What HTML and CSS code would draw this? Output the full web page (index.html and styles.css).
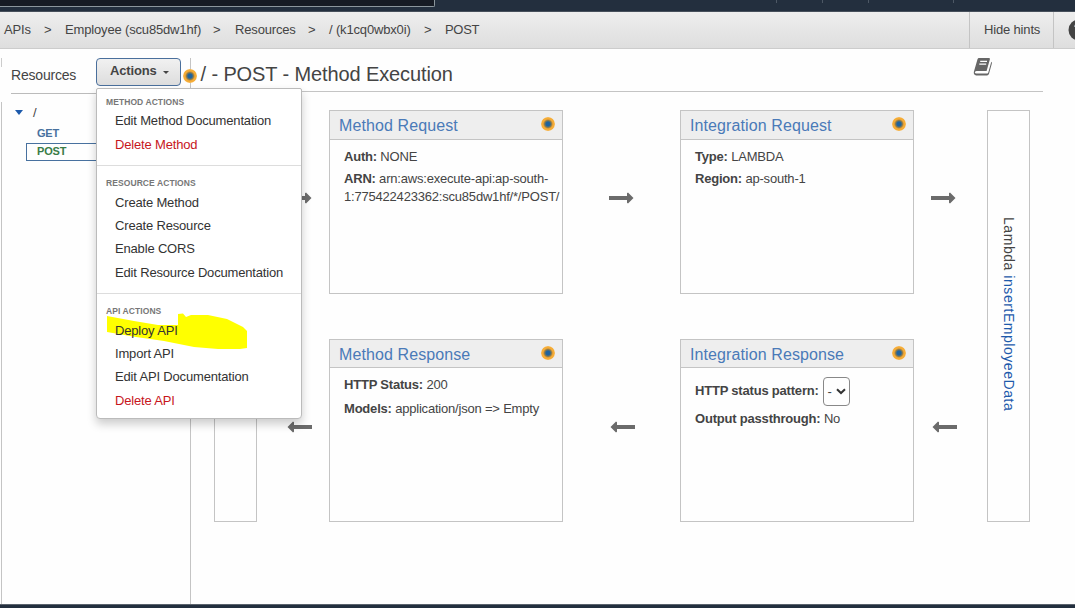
FILE: index.html
```html
<!DOCTYPE html>
<html lang="en">
<head>
<meta charset="utf-8">
<title>API Gateway - Method Execution</title>
<link rel="stylesheet" href="styles.css">
</head>
<body>
<svg class="defs" width="0" height="0" aria-hidden="true">
  <symbol id="arrow" viewBox="0 0 25 12"><path d="M0 4h18V1.200L19 0.600L24.500 6L19 11.400L18 10.800V8H0z" fill="#6b6b6b"/></symbol>
</svg>
<div class="page">
  <header class="topbar">
    <div class="search"></div>
    <div class="seps"><i></i><i></i><i></i><i></i></div>
  </header>
  <nav class="crumbs">
    <span class="c1">APIs</span><span class="gt g1">&gt;</span>
    <span class="c2">Employee (scu85dw1hf)</span><span class="gt g2">&gt;</span>
    <span class="c3">Resources</span><span class="gt g3">&gt;</span>
    <span class="c4">/ (k1cq0wbx0i)</span><span class="gt g4">&gt;</span>
    <span class="c5">POST</span>
    <div class="hints"><span>Hide hints</span></div>
    <svg class="help" width="22" height="22" viewBox="0 0 22 22"><circle cx="11" cy="11" r="10.500" fill="#444"/><path d="M7.500 8Q7.500 5 11 5T14.500 8Q14.500 10 11 12V14M11 16V18" fill="none" stroke="#dbe8f5" stroke-width="2.200"/></svg>
  </nav>
  <div class="body">
    <aside class="sidebar">
      <div class="side-head">
        <span class="side-title">Resources</span>
        <div class="actions">
          <button class="btn">Actions<span class="caret"></span></button>
          <div class="menu">
            <section>
              <h4>METHOD ACTIONS</h4>
              <a>Edit Method Documentation</a>
              <a class="danger">Delete Method</a>
            </section>
            <section>
              <h4>RESOURCE ACTIONS</h4>
              <a>Create Method</a>
              <a>Create Resource</a>
              <a>Enable CORS</a>
              <a>Edit Resource Documentation</a>
            </section>
            <section>
              <svg class="marker" width="142" height="36" viewBox="0 0 142 36"><path d="M1 3L28 8L52 12H72V1L77 0.500L80 4L85 2H102L121 6L137 14L141 18V35L134 36H112L88 34L58 28L30 24L1 19z" fill="#ff0"/></svg>
              <h4>API ACTIONS</h4>
              <a>Deploy API</a>
              <a>Import API</a>
              <a>Edit API Documentation</a>
              <a class="danger">Delete API</a>
            </section>
          </div>
        </div>
      </div>
      <div class="tree">
        <div class="root"><span class="tri"></span><span>/</span></div>
        <div class="get">GET</div>
        <div class="post">POST</div>
      </div>
    </aside>
    <main class="main">
      <div class="title-row">
        <i class="dot title-dot"></i>
        <h1>/ - POST - Method Execution</h1>
        <svg class="book" width="20" height="20" viewBox="0 0 20 20"><path d="M6 1H15.800Q17.300 1 16.900 2.300L13.600 14H3.500Q1.800 14 1.800 15.500Q2 16.500 3.500 16.500H14.200Q15 16.500 15.300 15.600L18.300 4.800Q19.300 5.300 18.800 6.800L16 16.800Q15.500 18.400 14 18.400H3.200Q0.400 18 0.800 15L4.500 2.300Q4.900 1 6 1z" fill="#666"/><path d="M7.200 4.400H14M6.300 7.200H13.200" stroke="#fff" stroke-width="1.300"/></svg>
      </div>
      <div class="flow">
        <div class="end client"></div>
        <div class="arr a1 r1"><svg><use href="#arrow"/></svg></div>
        <section class="card">
          <header><h2>Method Request</h2><i class="dot"></i></header>
          <p><b>Auth:</b> NONE</p>
          <p class="arn"><b>ARN:</b> arn:aws:execute-api:ap-south-<br>1:775422423362:scu85dw1hf/*/POST/</p>
        </section>
        <div class="arr a2 r1"><svg><use href="#arrow"/></svg></div>
        <section class="card int">
          <header><h2>Integration Request</h2><i class="dot"></i></header>
          <p><b>Type:</b> LAMBDA</p>
          <p><b>Region:</b> ap-south-1</p>
        </section>
        <div class="arr a3 r1"><svg><use href="#arrow"/></svg></div>
        <div class="end lambda"><span>Lambda <a>insertEmployeeData</a></span></div>
        <div class="arr a1 r2"><svg><use href="#arrow"/></svg></div>
        <section class="card low">
          <header><h2>Method Response</h2><i class="dot"></i></header>
          <p><b>HTTP Status:</b> 200</p>
          <p class="models"><b>Models:</b> application/json =&gt; Empty</p>
        </section>
        <div class="arr a2 r2"><svg><use href="#arrow"/></svg></div>
        <section class="card low int">
          <header><h2>Integration Response</h2><i class="dot"></i></header>
          <p class="pattern"><b>HTTP status pattern:</b><span class="select">-<svg width="10" height="7" viewBox="0 0 10 7"><path d="M1 1.200L5 5L9 1.200" fill="none" stroke="#333" stroke-width="2"/></svg></span></p>
          <p class="pass"><b>Output passthrough:</b> No</p>
        </section>
        <div class="arr a3 r2"><svg><use href="#arrow"/></svg></div>
      </div>
    </main>
  </div>
  <footer class="footer"></footer>
</div>
</body>
</html>
```
FILE: styles.css
```css
* { box-sizing: border-box; }
body { margin: 0; background: #fefefe; color: #444; font: 13px "Liberation Sans", Arial, sans-serif; }
h1, h2, h4, p { margin: 0; font-weight: normal; }
.defs { display: block; height: 0; }
.page { width: 1075px; height: 608px; display: flex; flex-direction: column; overflow: hidden; }

.topbar { height: 12px; flex: none; background: #232f3e; border-bottom: 1px solid #47505b; display: flex; justify-content: space-between; }
.search { width: 435px; height: 7px; background: #161b24; border: solid #8b969c; border-width: 0 1px 1px 0; border-radius: 0 0 2px 0; }
.seps { display: flex; margin-right: 121px; }
.seps i { width: 1px; height: 3px; background: #4d5865; margin-left: 45px; }
.seps i:first-child { margin-left: 0; }
.seps i:last-child { margin-left: 84px; }

.crumbs { height: 37px; flex: none; background: linear-gradient(#eee, #dedede); border-bottom: 1px solid #ccc; display: flex; align-items: center; padding-left: 4px; white-space: nowrap; letter-spacing: -.16px; }
.crumbs > span { position: static; padding-bottom: 1px; }
.c1 { width: 40px; } .c2 { width: 148px; } .c3 { width: 73px; } .c4 { width: 95px; }
.g1 { width: 21px; } .g2 { width: 22px; } .g3 { width: 21px; } .g4 { width: 21px; }
.hints { margin-left: auto; align-self: stretch; width: 85px; border: solid #c4c4c4; border-width: 0 1px; display: flex; align-items: center; padding: 0 0 1px 14px; }
.crumbs .c5 { width: 40px; letter-spacing: -.3px; }
.help { flex: none; margin: 0 -15px 0 14px; }

.body { flex: 1; display: flex; min-height: 0; }
.sidebar { width: 191px; flex: none; display: flex; flex-direction: column; border-right: 1px solid #c4c4c4; margin-top: 9px; }
.side-head { height: 36px; flex: none; margin-left: 1px; padding-left: 10px; display: flex; background: linear-gradient(#bbb, #bbb) 10px 35px / 180px 1px no-repeat, linear-gradient(#ccc, #ccc) 0 0 / 1px 9px no-repeat; }
.side-title { width: 85px; padding-top: 9px; font-size: 14px; line-height: 17px; letter-spacing: -.2px; }
.actions { position: relative; }
.btn { display: flex; align-items: center; width: 85px; height: 28px; padding: 0 0 3px 13px; border: 1px solid #4a6f9c; border-radius: 4px; background: linear-gradient(#f1f1f1, #ddd); font: bold 13px "Liberation Sans", Arial, sans-serif; letter-spacing: -.15px; color: #444; }
.caret { border: solid transparent; border-width: 3px 3px 0; border-top-color: #444; margin: 4px 0 0 6px; }
.menu { position: absolute; z-index: 2; left: 0; top: 30px; width: 206px; height: 331px; background: #fff; border: 1px solid #bbb; border-radius: 2px 2px 4px 4px; box-shadow: 0 5px 10px rgba(0,0,0,.2); padding-top: 6px; color: #333; }
.menu section { position: relative; padding: 0 0 9px 18px; }
.menu section + section { border-top: 1px solid #ddd; padding-top: 10px; }
.menu h4 { position: relative; margin: 0 0 .4px -9px; font-size: 8.500px; font-weight: bold; line-height: 14px; letter-spacing: .08px; color: #777; }
.menu a { position: relative; display: block; height: 23.400px; line-height: 23.400px; letter-spacing: -.17px; white-space: nowrap; }
.menu h4 + a { margin-top: .3px; }
.menu .danger { color: #c7161d; padding-top: .6px; }
.marker { position: absolute; left: 9px; top: 19px; }

.tree { flex: 1; margin-left: 1px; margin-top: 8px; border-left: 1px solid #c4c4c4; font-size: 11px; font-weight: bold; }
.root { display: flex; align-items: center; height: 21px; padding-left: 13px; font-size: 13px; font-weight: normal; }
.tri { border: solid transparent; border-width: 5px 4px 0; border-top-color: #1d5aab; margin-right: 10px; }
.get { height: 20px; line-height: 20px; padding-left: 35px; letter-spacing: -.2px; color: #48719f; }
.post { height: 18px; line-height: 15px; margin-left: 24px; padding-left: 10px; border: 1px solid #48719f; border-right: 0; letter-spacing: -.2px; color: #397c47; }

.main { flex: 1; min-width: 0; }
.title-row { position: relative; height: 43px; width: 852px; padding: 12px 0 0 9.500px; border-bottom: 1px solid #c4c4c4; display: flex; justify-content: space-between; }
h1 { font-size: 20px; line-height: 26px; letter-spacing: -.11px; }
.book { margin: -4px 50px 0 0; }
.dot { flex: none; width: 14px; height: 14px; border-radius: 50%; background: radial-gradient(circle, #1d63a0 0 2px, #8b7b4c 3.500px, #d99b3c 4.500px, #f5ac36 5px 6.300px, #f8c87b 7px); }
.title-dot { position: absolute; left: -8px; top: 20px; }

.flow { margin: 18px 0 0 23px; display: grid; grid-template-columns: 43px 72px 234px 117px 234px 73px 43px; grid-template-rows: 184px 45px 183px; }
.end { border: 1px solid #c4c4c4; grid-row: 1 / 4; }
.client { grid-column: 1; }
.lambda { grid-column: 7; writing-mode: vertical-rl; display: flex; align-items: center; padding-top: 106px; font-size: 14px; letter-spacing: .55px; white-space: nowrap; }
.lambda a { color: #1d5aab; }
.r1 { grid-row: 1; padding-top: 82px; }
.r2 { grid-row: 3; padding-top: 82px; }
.r2 svg { transform: scaleX(-1); }
.arr svg { display: block; width: 25px; height: 12px; }
.a1 { grid-column: 2; padding-left: 30px; }
.a2 { grid-column: 4; padding-left: 46px; }
.a3 { grid-column: 6; padding-left: 17px; }
.r2.a2 { padding-left: 47px; }
.r2.a3 { padding-left: 18px; }
.card { grid-column: 3; grid-row: 1; border: 1px solid #c4c4c4; white-space: nowrap; }
.card.int { grid-column: 5; }
.card.low { grid-row: 3; }
.card header { height: 29px; background: #eee; border-bottom: 1px solid #c4c4c4; display: flex; justify-content: space-between; padding: 6px 7px 0 9px; margin-bottom: 8px; }
.low header { height: 28px; }
h2 { font-size: 16px; line-height: 18px; letter-spacing: .1px; color: #4a7ab8; }
.card p { padding-left: 14px; line-height: 18px; margin-bottom: 4px; letter-spacing: -.2px; }
.low .models { margin-top: 6px; }
.low .pattern { display: flex; align-items: center; height: 29px; margin: 9px 0 4px; }
.pattern b { padding-bottom: 1px; }
.select { display: flex; align-items: center; gap: 4px; width: 27px; height: 29px; margin-left: 4px; padding-left: 4px; border: 1px solid #888; border-radius: 4px; }
.footer { height: 4px; flex: none; background: #232f3e; border-top: 1px solid #5b636d; }
```
